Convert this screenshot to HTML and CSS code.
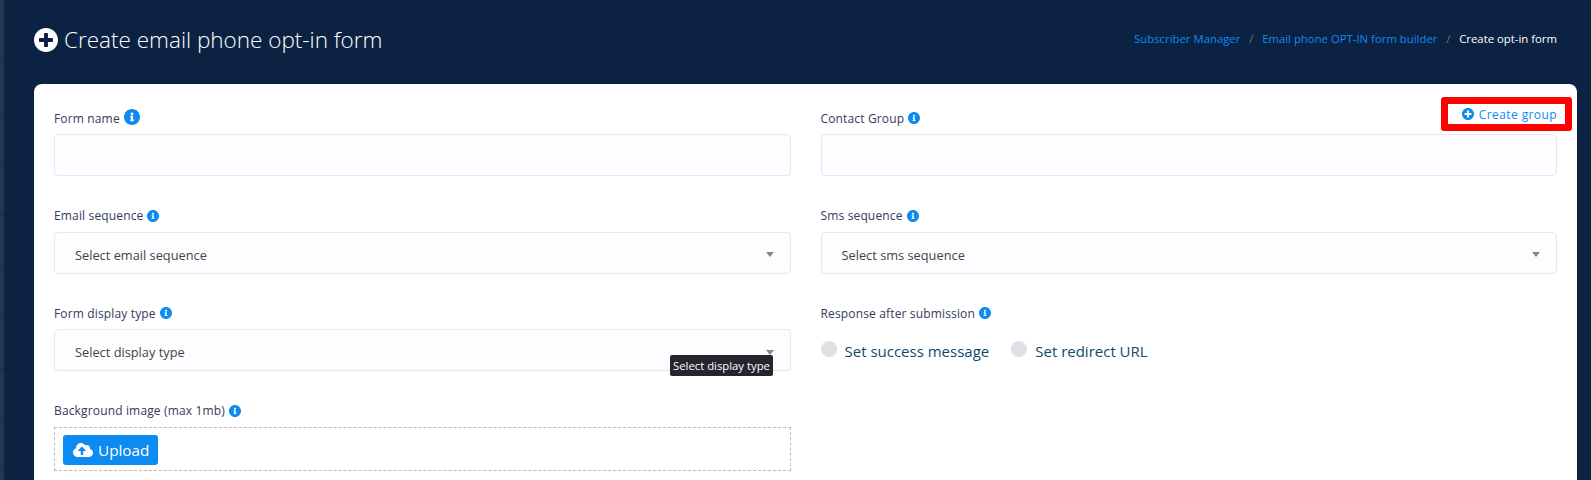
FILE: index.html
```html
<!DOCTYPE html>
<html lang="en">
<head>
<meta charset="utf-8">
<title>Create email phone opt-in form</title>
<link rel="stylesheet" href="styles.css">
</head>
<body>
<svg class="defs" width="0" height="0" aria-hidden="true">
  <symbol id="i-info" viewBox="8 8 496 496"><path d="M256 8C119.043 8 8 119.083 8 256c0 136.997 111.043 248 248 248s248-111.003 248-248C504 119.083 392.957 8 256 8zm0 110c23.196 0 42 18.804 42 42s-18.804 42-42 42-42-18.804-42-42 18.804-42 42-42zm56 254c0 6.627-5.373 12-12 12h-88c-6.627 0-12-5.373-12-12v-24c0-6.627 5.373-12 12-12h12v-64h-12c-6.627 0-12-5.373-12-12v-24c0-6.627 5.373-12 12-12h64c6.627 0 12 5.373 12 12v100h12c6.627 0 12 5.373 12 12v24z"/></symbol>
  <symbol id="i-plus" viewBox="8 8 496 496"><path d="M256 8C119 8 8 119 8 256s111 248 248 248 248-111 248-248S393 8 256 8zm144 276c0 6.6-5.4 12-12 12h-92v92c0 6.6-5.4 12-12 12h-56c-6.6 0-12-5.4-12-12v-92h-92c-6.6 0-12-5.4-12-12v-56c0-6.6 5.4-12 12-12h92v-92c0-6.6 5.4-12 12-12h56c6.6 0 12 5.4 12 12v92h92c6.6 0 12 5.4 12 12v56z"/></symbol>
  <symbol id="i-cloud" viewBox="0 32 640 448"><path d="M537.6 226.6c4.1-10.7 6.4-22.4 6.4-34.6 0-53-43-96-96-96-19.7 0-38.1 6-53.3 16.2C367 64.2 315.3 32 256 32c-88.4 0-160 71.6-160 160 0 2.7.1 5.4.2 8.1C40.2 219.8 0 273.2 0 336c0 79.5 64.5 144 144 144h368c70.7 0 128-57.3 128-128 0-61.9-44-113.6-102.4-125.4zM393.4 288H328v112c0 8.8-7.2 16-16 16h-48c-8.8 0-16-7.2-16-16V288h-65.4c-14.3 0-21.4-17.2-11.3-27.3l105.4-105.4c6.2-6.2 16.4-6.2 22.6 0l105.4 105.4c10.1 10.1 2.9 27.3-11.3 27.3z"/></symbol>
</svg>
<div class="shell">
  <div class="rail"></div>
  <main class="main">
    <header class="head">
      <h1 class="title"><svg class="title-icon"><use href="#i-plus"/></svg>Create email phone opt-in form</h1>
      <nav class="crumbs">
        <a class="crumb" href="#">Subscriber Manager</a><span class="sep">/</span>
        <a class="crumb" href="#">Email phone OPT-IN form builder</a><span class="sep">/</span>
        <span class="crumb-current">Create opt-in form</span>
      </nav>
    </header>
    <section class="card">
      <div class="grid">
        <div class="group">
          <label class="label">Form name <svg class="info info-lg"><use href="#i-info"/></svg></label>
          <div class="field"></div>
        </div>
        <div class="group">
          <label class="label">Contact Group <svg class="info"><use href="#i-info"/></svg></label>
          <div class="field"></div>
          <a class="create-group" href="#"><svg class="create-icon"><use href="#i-plus"/></svg>Create group</a>
        </div>
        <div class="group">
          <label class="label">Email sequence <svg class="info"><use href="#i-info"/></svg></label>
          <div class="field select"><span>Select email sequence</span><i class="caret"></i></div>
        </div>
        <div class="group">
          <label class="label">Sms sequence <svg class="info"><use href="#i-info"/></svg></label>
          <div class="field select"><span>Select sms sequence</span><i class="caret"></i></div>
        </div>
        <div class="group">
          <label class="label">Form display type <svg class="info"><use href="#i-info"/></svg></label>
          <div class="field select"><span>Select display type</span><i class="caret"></i></div>
          <div class="tooltip">Select display type</div>
        </div>
        <div class="group">
          <label class="label">Response after submission <svg class="info"><use href="#i-info"/></svg></label>
          <div class="radios">
            <span class="radio"><i class="dot"></i>Set success message</span>
            <span class="radio"><i class="dot"></i>Set redirect URL</span>
          </div>
        </div>
        <div class="group">
          <label class="label">Background image (max 1mb) <svg class="info"><use href="#i-info"/></svg></label>
          <div class="drop"><button class="upload" type="button"><svg class="cloud"><use href="#i-cloud"/></svg>Upload</button></div>
        </div>
      </div>
    </section>
  </main>
</div>
</body>
</html>
```
FILE: styles.css
```css
* { box-sizing: border-box; }
html, body { margin: 0; height: 480px; overflow: hidden; }
body { background: #0c2242; font-family: "Open Sans", "Noto Sans", sans-serif; color: #34395e; }
.defs { position: absolute; }
.shell { display: flex; height: 480px; }
.rail {
  width: 4px;
  flex: none;
  background: repeating-linear-gradient(#253655 0 50px, #1a2b4a 50px 51px) 0 12px;
}
.main { flex: 1; min-width: 0; padding: 0 14px 0 30px; }
.head { height: 84px; display: flex; align-items: center; justify-content: space-between; padding-right: 20px; }
.title { margin: 0 0 4px; display: flex; align-items: center; font-size: 22.5px; font-weight: 300; color: #fff; line-height: 32px; }
.title-icon { width: 24px; height: 24px; fill: #fff; margin-right: 6px; flex: none; }
.crumbs { display: flex; align-items: center; font-size: 11.35px; margin-bottom: 8px; }
.crumb { color: #0d8bf1; text-decoration: none; }
.sep { color: #6c757d; margin: 0 8.8px; }
.crumb-current { color: #fff; }
.card { background: #fff; border-radius: 8px 8px 0 0; height: 396px; padding: 20px 20px 0; }
.grid { display: grid; grid-template-columns: 1fr 1fr; column-gap: 30px; grid-auto-rows: 97.5px; }
.group { position: relative; }
.label { display: flex; align-items: center; height: 30px; padding-bottom: 2px; font-size: 12px; letter-spacing: .15px; color: #34395e; }
.info { width: 12px; height: 12px; fill: #0d8bf1; margin-left: 4px; flex: none; }
.info-lg { width: 16px; height: 16px; margin-top: -3px; }
.field { height: 42px; background: #fdfdff; border: 1px solid #e4e6fc; border-radius: 4px; }
.select { display: flex; align-items: center; justify-content: space-between; padding: 4px 16px 0 20px; font-size: 12.8px; color: #444; }
.caret { width: 0; height: 0; border: 4px solid transparent; border-top: 5px solid #888; border-bottom: 0; }
.create-group { position: absolute; right: -15px; top: -7px; display: flex; align-items: center; justify-content: flex-end; width: 131px; height: 34px; padding-right: 8px; border: 7px solid #f00; border-radius: 3px; font-size: 12px; letter-spacing: .4px; color: #0d8bf1; text-decoration: none; }
.create-icon { width: 12px; height: 12px; fill: #0d8bf1; margin-right: 5px; flex: none; }
.tooltip { position: absolute; left: 616px; top: 56px; width: 103px; height: 21px; background: #25252f; color: #fff; border-radius: 2px; font-size: 11.3px; display: flex; align-items: center; justify-content: center; white-space: nowrap; }
.radios { display: flex; align-items: center; gap: 22px; padding-top: 12px; font-size: 15px; color: #0e4a6e; }
.radio { display: flex; align-items: center; }
.dot { width: 16px; height: 16px; border-radius: 50%; background: #dee2e6; margin-right: 8px; margin-top: -4px; flex: none; }
.drop { height: 44px; border: 1px dashed #bbb; padding: 7px 8px; }
.upload { display: flex; align-items: center; height: 30px; width: 95px; padding: 0 0 0 10px; border: 0; border-radius: 3px; background: #0d8bf1; color: #fff; font: 15.3px "Open Sans", "Noto Sans", sans-serif; }
.cloud { width: 20px; height: 14px; fill: #fff; margin-right: 5px; flex: none; }
```
